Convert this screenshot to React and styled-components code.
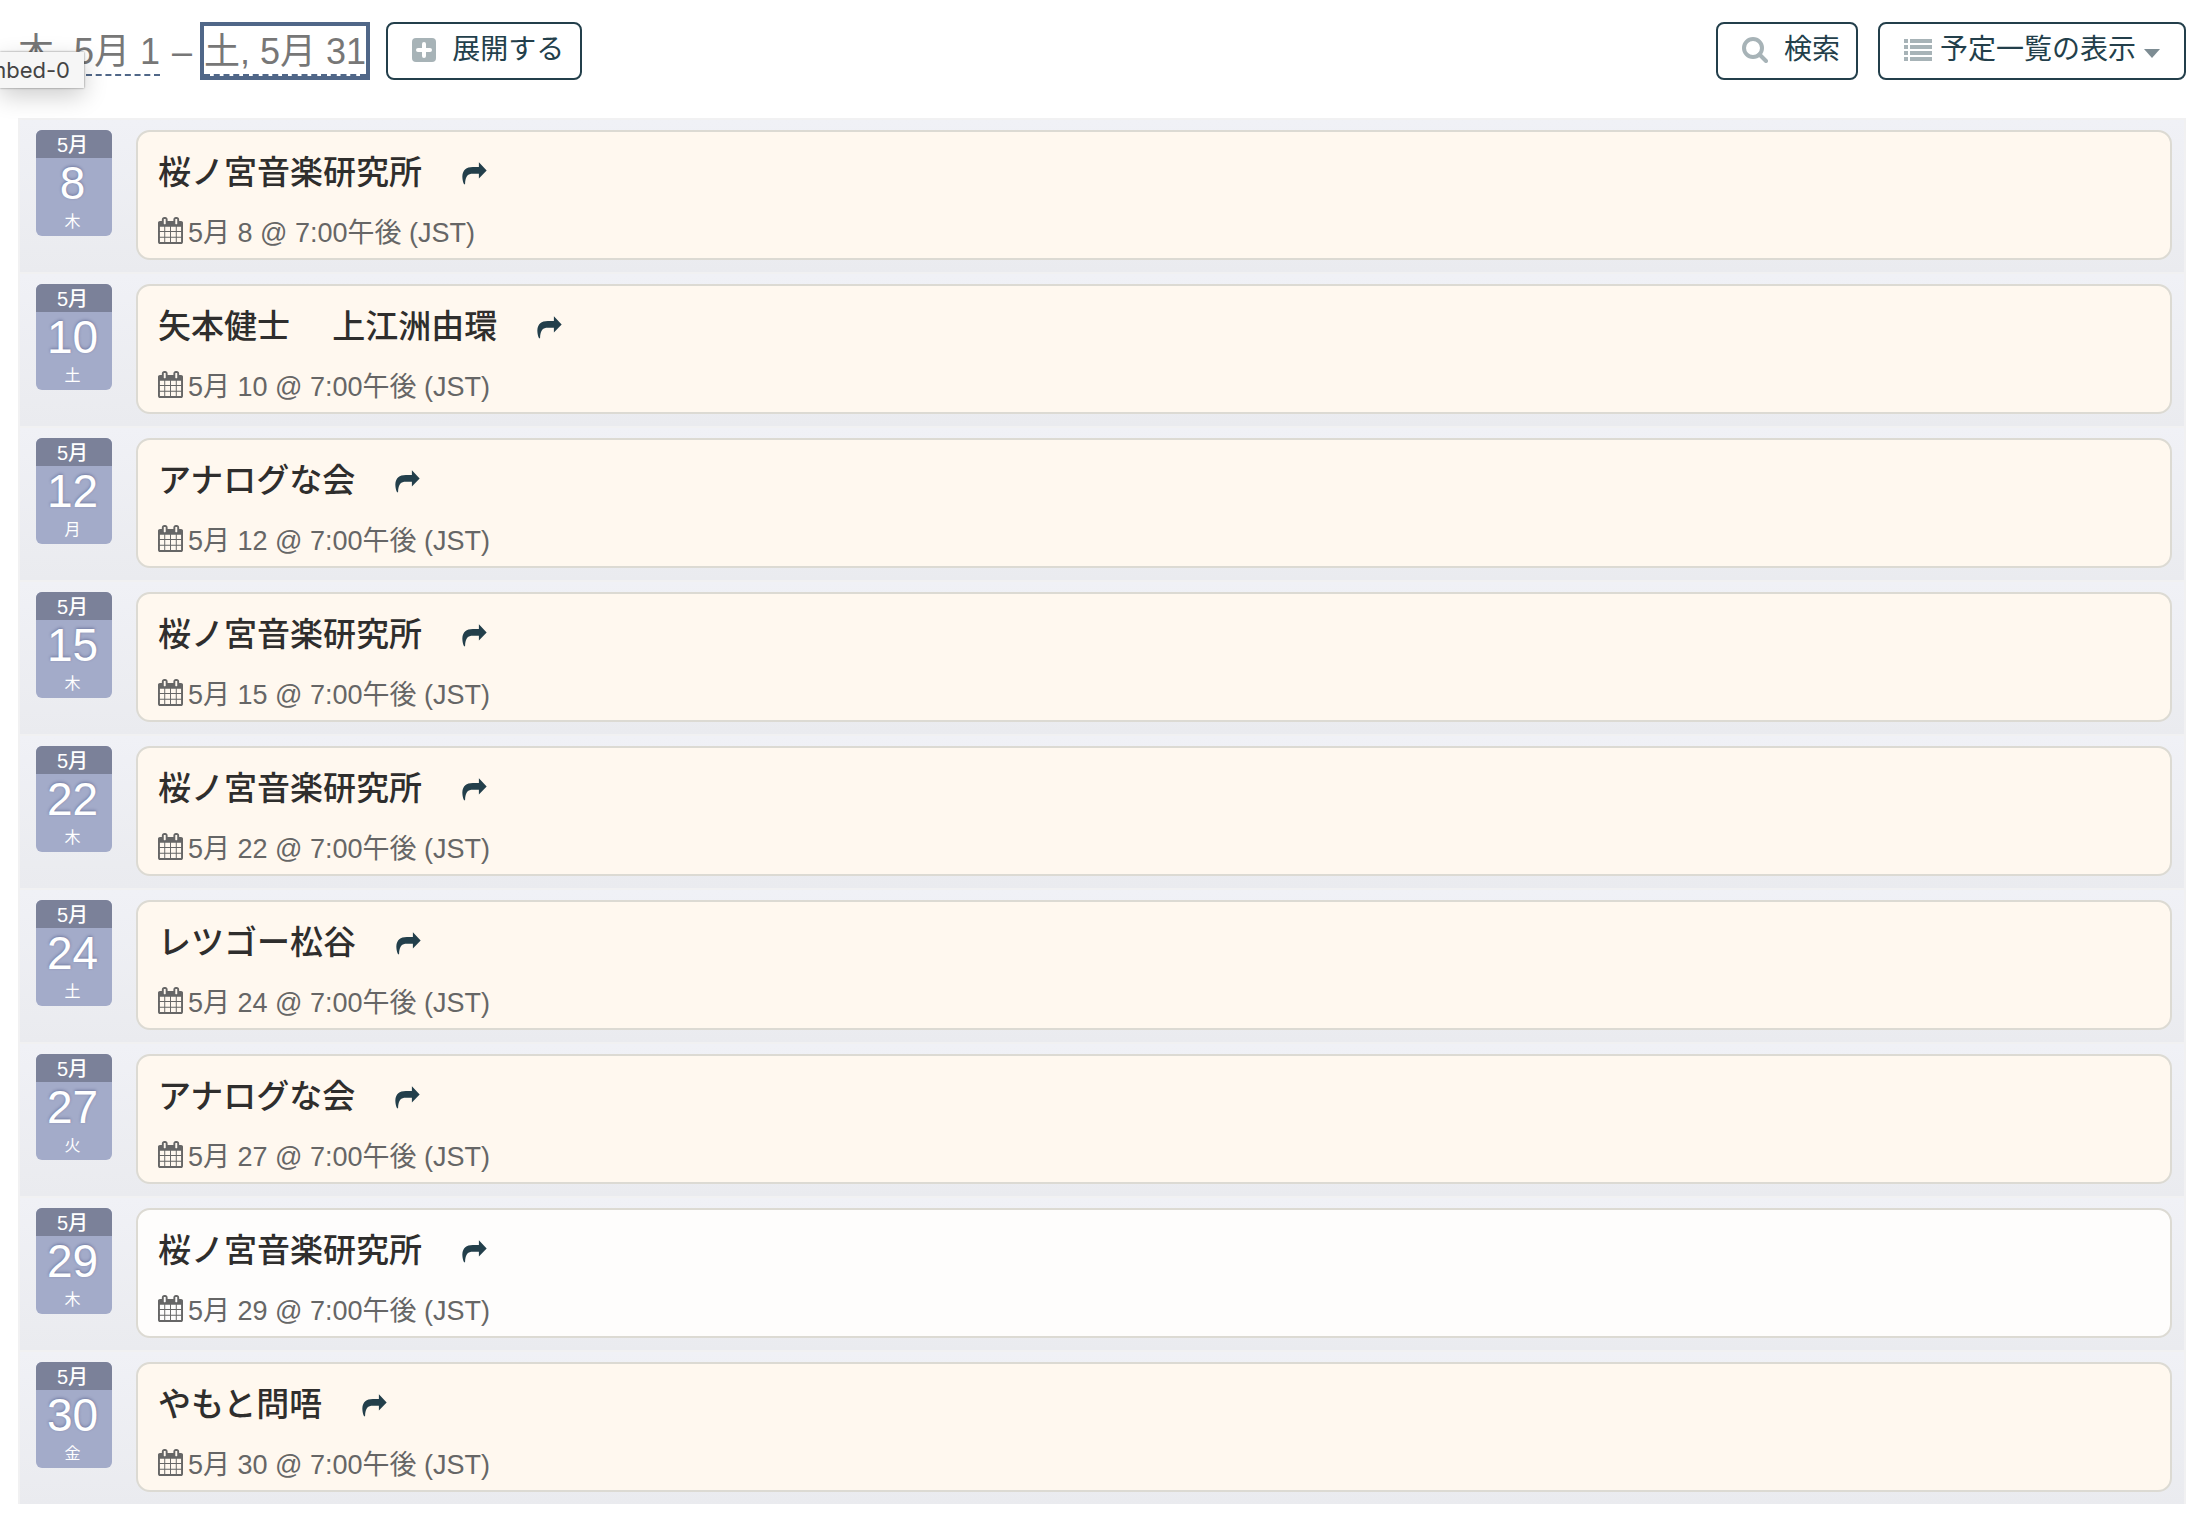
import React from 'react';
import styled, { createGlobalStyle } from 'styled-components';

const sans = '"Liberation Sans", "Noto Sans CJK JP", sans-serif';
const ink = '#233f4b';
const muted = '#a7b3b7';

const GlobalStyle = createGlobalStyle`
  * {
    box-sizing: border-box;
  }

  body {
    margin: 0;
    background: #fff;
    font-family: ${sans};
  }
`;

const Page = styled.main`
  position: relative;
  padding: 22px 12px 18px 18px;
`;

const Toolbar = styled.header`
  display: flex;
  align-items: center;
  justify-content: space-between;
  margin-bottom: 38px;
`;

const Group = styled.div`
  display: flex;
  align-items: center;
  gap: 20px;
`;

const Range = styled.div`
  display: flex;
  align-items: flex-start;
  color: #777;
  font-size: 36px;
  line-height: 44px;
  white-space: nowrap;
`;

const Dash = styled.span`
  width: 44px;
  padding-top: 4px;
  text-align: center;
`;

const DateLink = styled.a`
  padding-top: 4px;
  color: inherit;
  text-decoration: none;
  border-bottom: 2px dashed #506788;
  outline: ${props => props.$focused ? '4px solid #506788' : 'none'};
`;

const Button = styled.button`
  display: flex;
  align-items: center;
  height: 58px;
  padding: 0 ${props => props.$menu ? '24px' : '16px'} 2px 24px;
  gap: ${props => props.$menu ? '8px' : '16px'};
  border: 2px solid ${ink};
  border-radius: 8px;
  background: #fff;
  color: ${ink};
  font-family: ${sans};
  font-size: 28px;
  line-height: 40px;
  white-space: nowrap;
`;

const Caret = styled.span`
  margin-top: 6px;
  border: 8px solid transparent;
  border-top: 9px solid #7d8c93;
  border-bottom: 0;
`;

const Agenda = styled.ol`
  list-style: none;
  margin: 0;
  padding: 0;
  border: 2px solid #f1f1f2;
  border-width: 0 2px;
`;

const Row = styled.li`
  display: flex;
  align-items: flex-start;
  gap: 24px;
  padding: 10px 12px 12px 16px;
  border-top: 2px solid #f1f1f2;
  background: linear-gradient(#f0f1f6, #eaebef);
`;

const DateTag = styled.a`
  display: block;
  flex: none;
  width: 76px;
  border-radius: 6px;
  overflow: hidden;
  background: #a3abc9;
  color: #fff;
  text-align: center;
  text-decoration: none;

  span {
    display: block;
    padding-right: 3px;
  }
`;

const Month = styled.span`
  padding-top: 2px;
  background: #7b8199;
  font-size: 20px;
  font-weight: 500;
  line-height: 26px;
`;

const Day = styled.span`
  font-size: 46px;
  line-height: 50px;
  text-shadow: 0 -1px 3px rgba(40, 50, 100, .4);
`;

const Weekday = styled.span`
  font-size: 16px;
  line-height: 28px;
`;

const Card = styled.article`
  flex: 1;
  min-width: 0;
  padding: 22px 20px 9px;
  border: 2px solid #dcdad3;
  border-radius: 14px;
  background: ${props => props.$plain ? '#fefdfc' : '#fff8ef'};
`;

const TitleRow = styled.div`
  display: flex;
  align-items: center;
  gap: 40px;
  margin-bottom: 25px;
`;

const Title = styled.h3`
  margin: 0;
  color: #2f2e2d;
  font-size: 33px;
  font-weight: 500;
  line-height: 38px;
  white-space: pre-wrap;
`;

const ShareLink = styled.a`
  display: flex;
  color: ${ink};
`;

const Time = styled.div`
  display: flex;
  align-items: flex-start;
  gap: 5px;
  color: #666;
  font-size: 27px;
  line-height: 32px;
`;

const StatusTip = styled.div`
  position: absolute;
  left: 0;
  top: 52px;
  display: flex;
  justify-content: flex-end;
  width: 84px;
  padding-right: 14px;
  overflow: hidden;
  background: #f6f6f6;
  box-shadow: 0 0 2px rgba(0, 0, 0, .5), 0 8px 24px rgba(0, 0, 0, .2);
  color: #444;
  font-family: Inter, sans-serif;
  font-size: 22px;
  line-height: 36px;
  white-space: nowrap;
`;

function PlusIcon () {
  return (
    <svg width="24" height="24" viewBox="0 0 24 24" aria-hidden="true">
      <rect width="24" height="24" rx="4" fill={muted} />
      <path d="M12 6v12M6 12h12" stroke="#fff" strokeWidth="4" strokeLinecap="round" />
    </svg>
  );
}

function SearchIcon () {
  return (
    <svg width="26" height="26" viewBox="0 0 26 26" fill="none" stroke={muted} strokeWidth="4" aria-hidden="true">
      <circle cx="11" cy="11" r="9" />
      <path d="M17.5 17.5L24 24" strokeLinecap="round" />
    </svg>
  );
}

function ListIcon () {
  return (
    <svg width="28" height="22" viewBox="0 0 28 22" fill={muted} aria-hidden="true">
      {[0, 6, 12, 18].map(y => (
        <path key={y} d={`M0 ${y}h4v4h-4zM6 ${y}h22v4h-22z`} />
      ))}
    </svg>
  );
}

function ShareIcon () {
  return (
    <svg width="25" height="23" viewBox="36 21 74 68" fill="currentColor" aria-hidden="true">
      <path d="M86 22L109 46L86 70V56H68C54 56 46 62 45 87H42C38 78 37 70 37 63C38 45 49 36 68 36H86Z" />
    </svg>
  );
}

function CalendarIcon () {
  return (
    <svg width="25" height="27" viewBox="64 0 1664 1792" fill="currentColor" aria-hidden="true">
      <path d="M192 1664h288v-288h-288v288zm352 0h320v-288h-320v288zm-352-352h288v-320h-288v320zm352 0h320v-320h-320v320zm-352-384h288v-288h-288v288zm736 736h320v-288h-320v288zm-384-736h320v-288h-320v288zm768 736h288v-288h-288v288zm-384-352h320v-320h-320v320zm-352-864v-288q0-13-9.5-22.5t-22.5-9.5h-64q-13 0-22.5 9.5t-9.5 22.5v288q0 13 9.5 22.5t22.5 9.5h64q13 0 22.5-9.5t9.5-22.5zm736 864h288v-320h-288v320zm-384-384h320v-288h-320v288zm384 0h288v-288h-288v288zm32-480v-288q0-13-9.5-22.5t-22.5-9.5h-64q-13 0-22.5 9.5t-9.5 22.5v288q0 13 9.5 22.5t22.5 9.5h64q13 0 22.5-9.5t9.5-22.5zm384-64v1280q0 52-38 90t-90 38h-1408q-52 0-90-38t-38-90v-1280q0-52 38-90t90-38h128v-96q0-66 47-113t113-47h64q66 0 113 47t47 113v96h384v-96q0-66 47-113t113-47h64q66 0 113 47t47 113v96h128q52 0 90 38t38 90z" />
    </svg>
  );
}

const events = [
  { day: 8, weekday: '木', title: '桜ノ宮音楽研究所' },
  { day: 10, weekday: '土', title: '矢本健士　 上江洲由環' },
  { day: 12, weekday: '月', title: 'アナログな会' },
  { day: 15, weekday: '木', title: '桜ノ宮音楽研究所' },
  { day: 22, weekday: '木', title: '桜ノ宮音楽研究所' },
  { day: 24, weekday: '土', title: 'レツゴー松谷' },
  { day: 27, weekday: '火', title: 'アナログな会' },
  { day: 29, weekday: '木', title: '桜ノ宮音楽研究所', plain: true },
  { day: 30, weekday: '金', title: 'やもと問唔' },
];

function Event ({ day, weekday, title, plain }) {
  return (
    <Row>
      <DateTag href={`#day-${day}`}>
        <Month>5月</Month>
        <Day>{day}</Day>
        <Weekday>{weekday}</Weekday>
      </DateTag>
      <Card $plain={plain}>
        <TitleRow>
          <Title>{title}</Title>
          <ShareLink href={`#event-${day}`} aria-label={title}>
            <ShareIcon />
          </ShareLink>
        </TitleRow>
        <Time>
          <CalendarIcon />
          <span>5月 {day} @ 7:00午後 (JST)</span>
        </Time>
      </Card>
    </Row>
  );
}

export default function App () {
  return (
    <Page>
      <GlobalStyle />
      <Toolbar>
        <Group>
          <Range>
            <DateLink href="#start">木, 5月 1</DateLink>
            <Dash>–</Dash>
            <DateLink href="#end" $focused>土, 5月 31</DateLink>
          </Range>
          <Button type="button"><PlusIcon />展開する</Button>
        </Group>
        <Group>
          <Button type="button"><SearchIcon />検索</Button>
          <Button type="button" $menu><ListIcon />予定一覧の表示<Caret /></Button>
        </Group>
      </Toolbar>
      <Agenda>
        {events.map(event => <Event key={event.day} {...event} />)}
      </Agenda>
      <StatusTip>mbed-0</StatusTip>
    </Page>
  );
}
